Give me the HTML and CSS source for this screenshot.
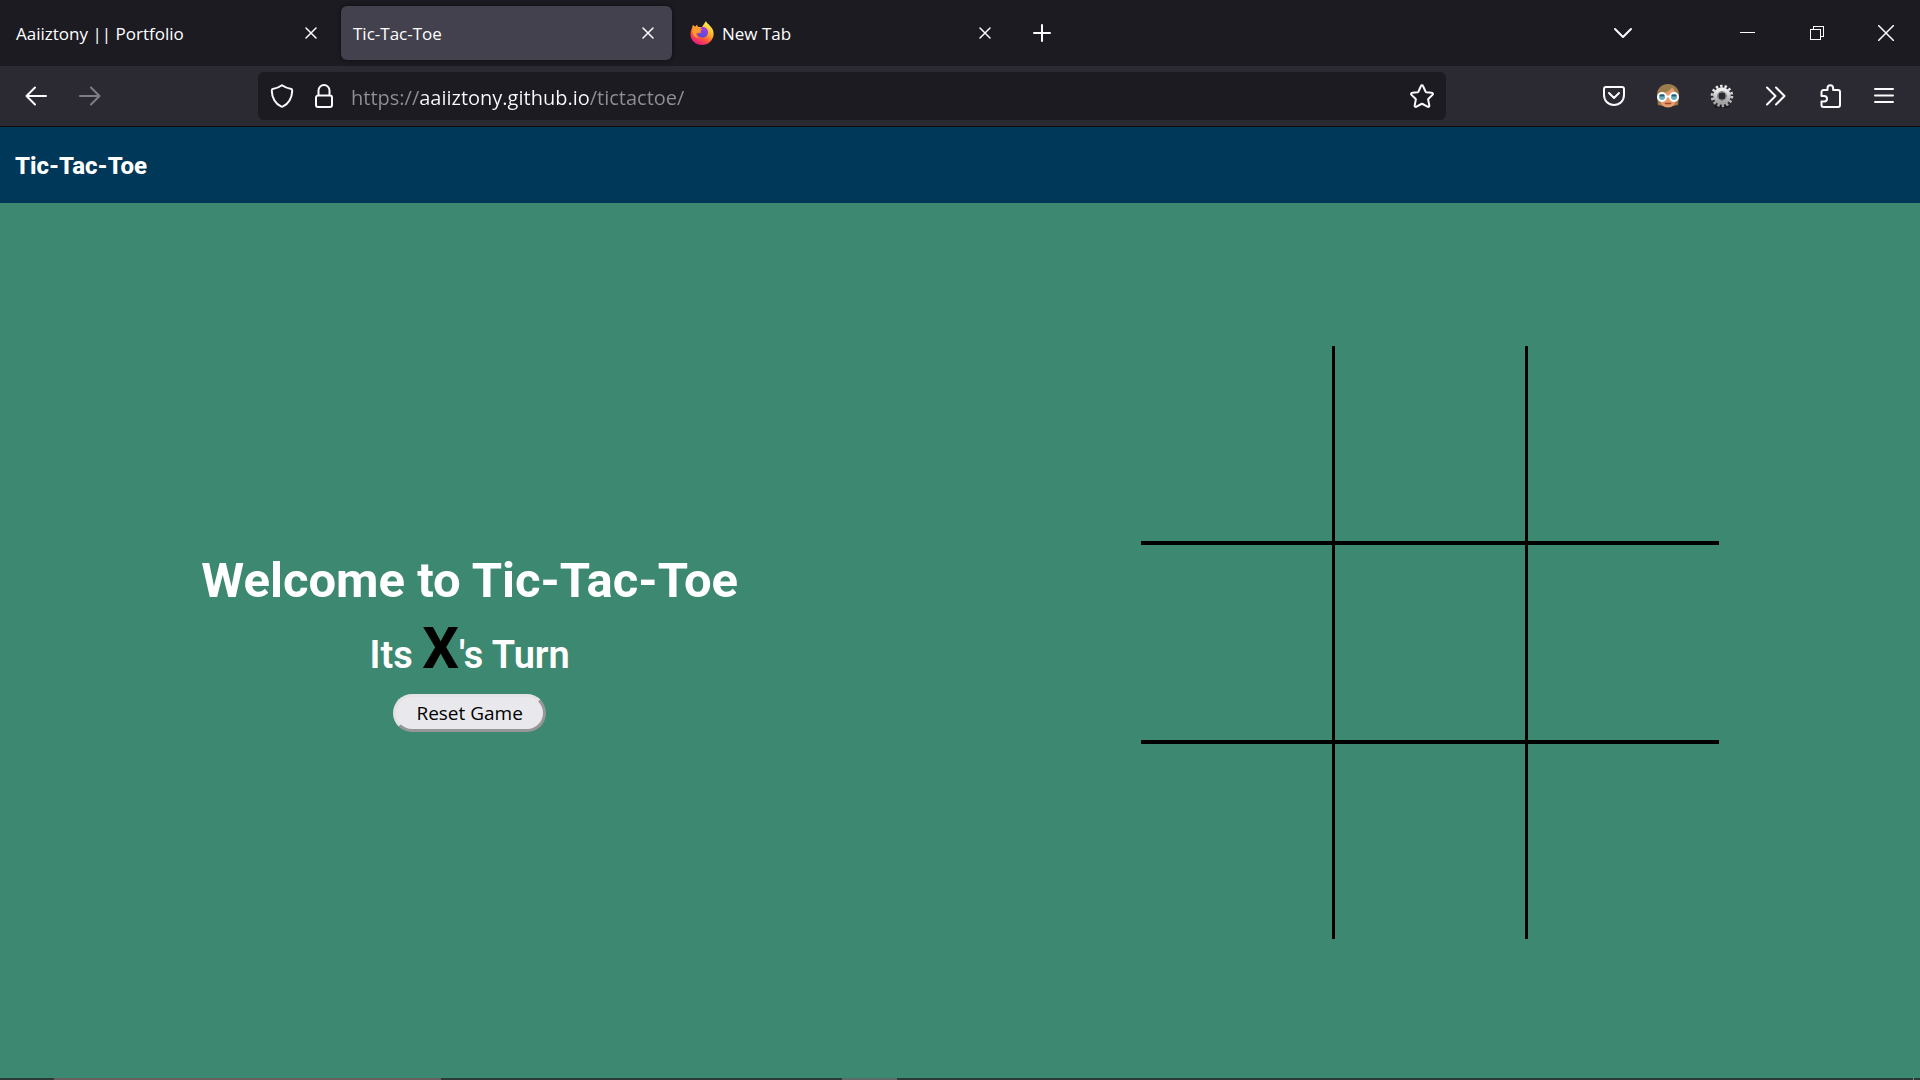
FILE: index.html
```html
<!DOCTYPE html>
<html lang="en">
<head>
<meta charset="utf-8">
<title>Tic-Tac-Toe</title>
<link rel="stylesheet" href="styles.css">
</head>
<body>
<header class="browser">
  <div class="tabstrip">
    <div class="tabs">
      <div class="tab">
        <span class="tab-label">Aaiiztony || Portfolio</span>
        <button class="tab-close" aria-label="Close tab"><svg width="12" height="12" viewBox="0 0 12 12"><path d="M1 1l10 10M11 1L1 11"/></svg></button>
      </div>
      <div class="tab tab-active">
        <span class="tab-label">Tic-Tac-Toe</span>
        <button class="tab-close" aria-label="Close tab"><svg width="12" height="12" viewBox="0 0 12 12"><path d="M1 1l10 10M11 1L1 11"/></svg></button>
      </div>
      <div class="tab">
        <svg class="favicon" width="24" height="24" viewBox="0 0 24 24">
          <defs>
            <linearGradient id="fire" x1="0.8" y1="0.1" x2="0.3" y2="1"><stop offset="0" stop-color="#fff44f"/><stop offset="0.35" stop-color="#ffb32b"/><stop offset="0.65" stop-color="#ff5a3a"/><stop offset="1" stop-color="#e31587"/></linearGradient>
            <linearGradient id="globe" x1="0.7" y1="0" x2="0.3" y2="1"><stop offset="0" stop-color="#a63be0"/><stop offset="1" stop-color="#4a4fd8"/></linearGradient>
          </defs>
          <path fill="url(#fire)" d="M2 7l1-3 2 2 2-2 1 2 4 0 2-3 2-3c1 3 3 3 4 5l1 1c2 2 3 5 2.500 8.500C22.500 20 18 24 12 24 5.500 24 .500 19.500.500 13c0-2 .500-4 1.500-6z"/>
          <path fill="url(#globe)" d="M10 7c2-1.500 5-1 6.500.500C18.500 9 18.500 13 16.500 15c-2 2-5.500 2-7.500.500-1.500-1-2-2.500-1.500-3.500 1.500 1 3 0 4-1-1.500-.500-2-2-1.500-4z"/>
          <path fill="#ff9a2e" d="M3 4l2 2 2-2 1 3 4 1c-1 2-2 2-3 3s-2 1-3 1c0 2 1 4 3 5-4 0-7-3-6.500-8z"/>
        </svg>
        <span class="tab-label">New Tab</span>
        <button class="tab-close" aria-label="Close tab"><svg width="12" height="12" viewBox="0 0 12 12"><path d="M1 1l10 10M11 1L1 11"/></svg></button>
      </div>
      <button class="tool" aria-label="New tab"><svg width="18" height="18" viewBox="0 0 18 18"><path class="heavy" d="M9 1v16M1 9h16"/></svg></button>
    </div>
    <div class="window-tools">
      <button class="tool list-tabs" aria-label="List all tabs"><svg width="20" height="12" viewBox="0 0 20 12"><path class="heavy" d="M2 2l8 8 8-8"/></svg></button>
      <button class="window-button" aria-label="Minimize"><svg width="16" height="16" viewBox="0 0 16 16"><path class="crisp" d="M0 7.500h15"/></svg></button>
      <button class="window-button" aria-label="Restore"><svg width="16" height="16" viewBox="0 0 16 16"><path class="crisp" d="M1.500 4.500h10v10h-10zM4.500 4.500v-3h10v10h-3"/></svg></button>
      <button class="window-button" aria-label="Close window"><svg width="16" height="16" viewBox="0 0 16 16"><path d="M.500.500l15 15M15.500.500l-15 15"/></svg></button>
    </div>
  </div>
  <div class="toolbar">
    <div class="history">
      <button class="tool" aria-label="Back"><svg width="24" height="24" viewBox="0 0 24 24"><path class="heavy" d="M22 12H2.500M11 3.500L2.500 12l8.500 8.500"/></svg></button>
      <button class="tool" aria-label="Forward" disabled><svg width="24" height="24" viewBox="0 0 24 24"><path class="heavy" d="M2 12h19.500M13 3.500l8.500 8.500-8.500 8.500"/></svg></button>
    </div>
    <div class="urlbar">
      <div class="site-icons">
        <button aria-label="Tracking protection"><svg width="24" height="24" viewBox="0 0 24 24"><path class="heavy" d="M12 1.200c2.500 1.800 6 3.200 9.300 3.800 1 .200.900.900.900 2-.100 7-4 13-9.200 15.400-.700.400-1.300.400-2 0C5.800 20 1.900 14 1.800 7c0-1.100-.100-1.800.900-2C6 4.400 9.500 3 12 1.200z"/></svg></button>
        <button aria-label="Site information"><svg width="24" height="24" viewBox="0 0 24 24"><path class="heavy" d="M6.500 11V6.500a5.500 5.500 0 0 1 11 0V11M6 11.500h12a2 2 0 0 1 2 2V21a2 2 0 0 1-2 2H6a2 2 0 0 1-2-2v-7.500a2 2 0 0 1 2-2z"/></svg></button>
      </div>
      <input class="url" type="text" aria-label="Address" value="https://aaiiztony.github.io/tictactoe/">
      <button aria-label="Bookmark this page"><svg width="24" height="24" viewBox="0 0 24 24"><path class="heavy" d="M10.900 2.100c.400-1 1.800-1 2.200 0l2.400 5.400c.200.400.500.600.900.700l5.300.600c1.200.100 1.600 1.300.800 2.100l-4 3.900c-.300.300-.400.700-.300 1.100l1.100 5.500c.200 1.100-.800 1.900-1.800 1.300L12.600 20c-.400-.200-.800-.200-1.200 0l-4.900 2.700c-1 .600-2-.200-1.800-1.300l1.100-5.500c.100-.400 0-.800-.300-1.100l-4-3.900c-.800-.800-.400-2 .800-2.100l5.300-.600c.400-.100.700-.300.900-.700z"/></svg></button>
    </div>
    <div class="extensions">
      <button class="tool" aria-label="Save to Pocket"><svg width="24" height="24" viewBox="0 0 24 24"><path class="heavy" d="M4 3h16a2 2 0 0 1 2 2v6c0 6-4.500 10-10 10S2 17 2 11V5a2 2 0 0 1 2-2zM7 9l5 5 5-5"/></svg></button>
      <button class="tool" aria-label="Glasses extension"><svg width="24" height="24" viewBox="0 0 24 24">
        <path fill="#9b7d4d" stroke="none" d="M12 0C5 0 .500 5 1 12l1 9 5 1h10l5-1 1-9C23.500 5 19 0 12 0z"/>
        <path fill="#e59b6c" stroke="none" d="M16 3c-2 4-7 6-12 7v6c0 4 3.500 7.500 8 7.500s8-3.500 8-7.500V9z"/>
        <path stroke="#a5452f" stroke-width="1.500" d="M9.500 19.500h5"/>
        <circle cx="6" cy="13" r="4" fill="#67aebd" stroke="#fff" stroke-width="2"/><circle cx="18" cy="13" r="4" fill="#67aebd" stroke="#fff" stroke-width="2"/>
        <path stroke="#fff" stroke-width="2" d="M10 12.500h4"/><path stroke="#315b70" stroke-width="2" d="M4.500 11.500h3M16.500 11.500h3"/>
      </svg></button>
      <button class="tool" aria-label="Gear extension"><svg width="24" height="24" viewBox="0 0 24 24" class="gear">
        <defs><linearGradient id="steel" x1="0" y1="0" x2="0" y2="1"><stop offset="0" stop-color="#ededed"/><stop offset="1" stop-color="#a2a2a2"/></linearGradient></defs>
        <ellipse cx="12" cy="22.500" rx="8" ry="1.500" fill="#17161c" stroke="none"/>
        <circle cx="12" cy="12" r="9.800" stroke="url(#steel)" stroke-width="3" stroke-dasharray="2.400 2"/>
        <circle cx="12" cy="12" r="6.200" stroke="url(#steel)" stroke-width="5"/>
        <circle cx="12" cy="12" r="4.500" stroke="#858585" stroke-width="1"/>
      </svg></button>
      <button class="tool" aria-label="More tools"><svg width="24" height="24" viewBox="0 0 24 24"><path class="heavy" d="M3 3.500l8.500 8.500L3 20.500M12 3.500l8.500 8.500-8.500 8.500"/></svg></button>
      <button class="tool" aria-label="Extensions"><svg width="24" height="24" viewBox="0 0 24 24"><path class="heavy" d="M3.500 9.500V8a2 2 0 0 1 2-2H9.500V4a2.800 2.800 0 0 1 5.600 0v2H20a2 2 0 0 1 2 2v13a2 2 0 0 1-2 2H5.500a2 2 0 0 1-2-2v-3.500h2.700a2.800 2.800 0 0 0 0-5.600H3.500z"/></svg></button>
      <button class="tool" aria-label="Application menu"><svg width="24" height="24" viewBox="0 0 24 24"><path class="heavy" d="M3 5h18M3 11.500h18M3 18h18"/></svg></button>
    </div>
  </div>
</header>
<nav class="navbar"><a class="brand" href="#">Tic-Tac-Toe</a></nav>
<main class="game">
  <section class="info">
    <h1 class="welcome">Welcome to Tic-Tac-Toe</h1>
    <h2 class="turn">Its <span class="player">X</span>'s Turn</h2>
    <button class="reset">Reset Game</button>
  </section>
  <section class="board" aria-label="Game board">
    <button class="cell" aria-label="Row 1, column 1"></button>
    <button class="cell" aria-label="Row 1, column 2"></button>
    <button class="cell" aria-label="Row 1, column 3"></button>
    <button class="cell" aria-label="Row 2, column 1"></button>
    <button class="cell" aria-label="Row 2, column 2"></button>
    <button class="cell" aria-label="Row 2, column 3"></button>
    <button class="cell" aria-label="Row 3, column 1"></button>
    <button class="cell" aria-label="Row 3, column 2"></button>
    <button class="cell" aria-label="Row 3, column 3"></button>
  </section>
</main>
<footer class="taskbar"><span class="task task-search"></span><span class="task task-active"></span><span class="task task-edge"></span></footer>
</body>
</html>
```

FILE: styles.css
```css
* { box-sizing: border-box; }

body {
  margin: 0;
  min-height: 100vh;
  display: flex;
  flex-direction: column;
  background: #3d8871;
  color: #fff;
  font-family: Roboto, sans-serif;
}

button {
  padding: 0;
  border: 0;
  background: none;
  color: inherit;
  font: inherit;
}

svg {
  display: block;
  fill: none;
  stroke: #fbfbfe;
  stroke-width: 1.5;
  stroke-linecap: round;
  stroke-linejoin: round;
}

.heavy { stroke-width: 2; }
.crisp { stroke-width: 1; shape-rendering: crispEdges; stroke-linecap: butt; stroke-linejoin: miter; }
.gear { stroke-linecap: butt; }

/* Browser window */
.browser {
  font-family: "Open Sans", sans-serif;
  background: #2b2a33;
  border-bottom: 1px solid #0c0c0d;
}

.tabstrip {
  display: flex;
  align-items: center;
  height: 66px;
  padding-left: 4px;
  background: #1c1b22;
}

.tabs { display: flex; align-items: center; gap: 6px; }

.tab {
  display: flex;
  align-items: center;
  gap: 8px;
  width: 331px;
  height: 54px;
  padding: 0 18px 0 12px;
  border-radius: 6px;
  font-size: 17px;
}

.tab-active { background: #42414d; box-shadow: 0 0 4px #0c0c0d; }
.tab-label { flex: 1; }
.favicon { stroke: none; }

.tool {
  display: grid;
  place-items: center;
  width: 54px;
  height: 48px;
}

.tool:disabled { opacity: 0.4; }

.window-tools {
  display: flex;
  align-items: center;
  margin-left: auto;
}

.list-tabs { margin-right: 63px; }

.window-button {
  display: grid;
  place-items: center;
  width: 69px;
  height: 66px;
}

.toolbar {
  display: flex;
  align-items: center;
  height: 60px;
  padding: 0 9px;
}

.history { display: flex; flex: 249 1 0; }

.urlbar {
  display: flex;
  align-items: center;
  gap: 15px;
  flex: 1164 1 0;
  height: 48px;
  padding: 0 12px;
  border-radius: 6px;
  background: #1c1b22;
}

.site-icons { display: flex; gap: 18px; }

.url {
  flex: 1;
  min-width: 0;
  height: 48px;
  padding: 2px 0 0;
  border: 0;
  outline: 0;
  /* dims the scheme and the path, leaving the host bright */
  background: linear-gradient(90deg, #8f8f94 68px, #fbfbfe 68px 238px, #8f8f94 238px);
  background-clip: text;
  color: transparent;
  font: 20px "Open Sans", sans-serif;
}

.extensions {
  display: flex;
  flex: 465 1 0;
  justify-content: flex-end;
}

/* Game page */
.navbar {
  display: flex;
  align-items: center;
  height: 76px;
  padding: 2px 15px 0;
  background: #003859;
}

.brand {
  color: #fff;
  font-size: 24px;
  font-weight: 800;
  text-decoration: none;
}

.game {
  flex: 1;
  display: flex;
  align-items: center;
  justify-content: space-around;
  padding-top: 4px;
}

.info {
  display: flex;
  flex-direction: column;
  align-items: center;
  gap: 5px;
}

.welcome { margin: 0; font-size: 49px; font-weight: 700; line-height: 56px; }
.turn { margin: 0; font-size: 38px; font-weight: 600; line-height: 68px; }
.player { color: #000; font-size: 58px; font-weight: 700; }

.reset {
  height: 38px;
  padding: 0 20px;
  border: 3px solid;
  border-color: #e3e3e3 #979797 #979797 #e3e3e3;
  border-radius: 19px;
  background: #e9e9ed;
  color: #000;
  font: 19px "Open Sans", Tahoma, sans-serif;
}

.board {
  display: grid;
  grid-template-columns: 191px 190px 191px;
  grid-template-rows: repeat(3, 195px);
  gap: 4px 3px;
  background: #000;
}

.cell { background: #3d8871; }

.taskbar {
  display: flex;
  height: 2px;
  padding: 0 6px 0 54px;
  background: #2b3b38;
}

.task-search { width: 387px; background: #69605f; }
.task-active { width: 55px; margin-left: 401px; background: #5c6b66; }
.task-edge { width: 1px; margin-left: auto; background: #7b8a86; }
```
